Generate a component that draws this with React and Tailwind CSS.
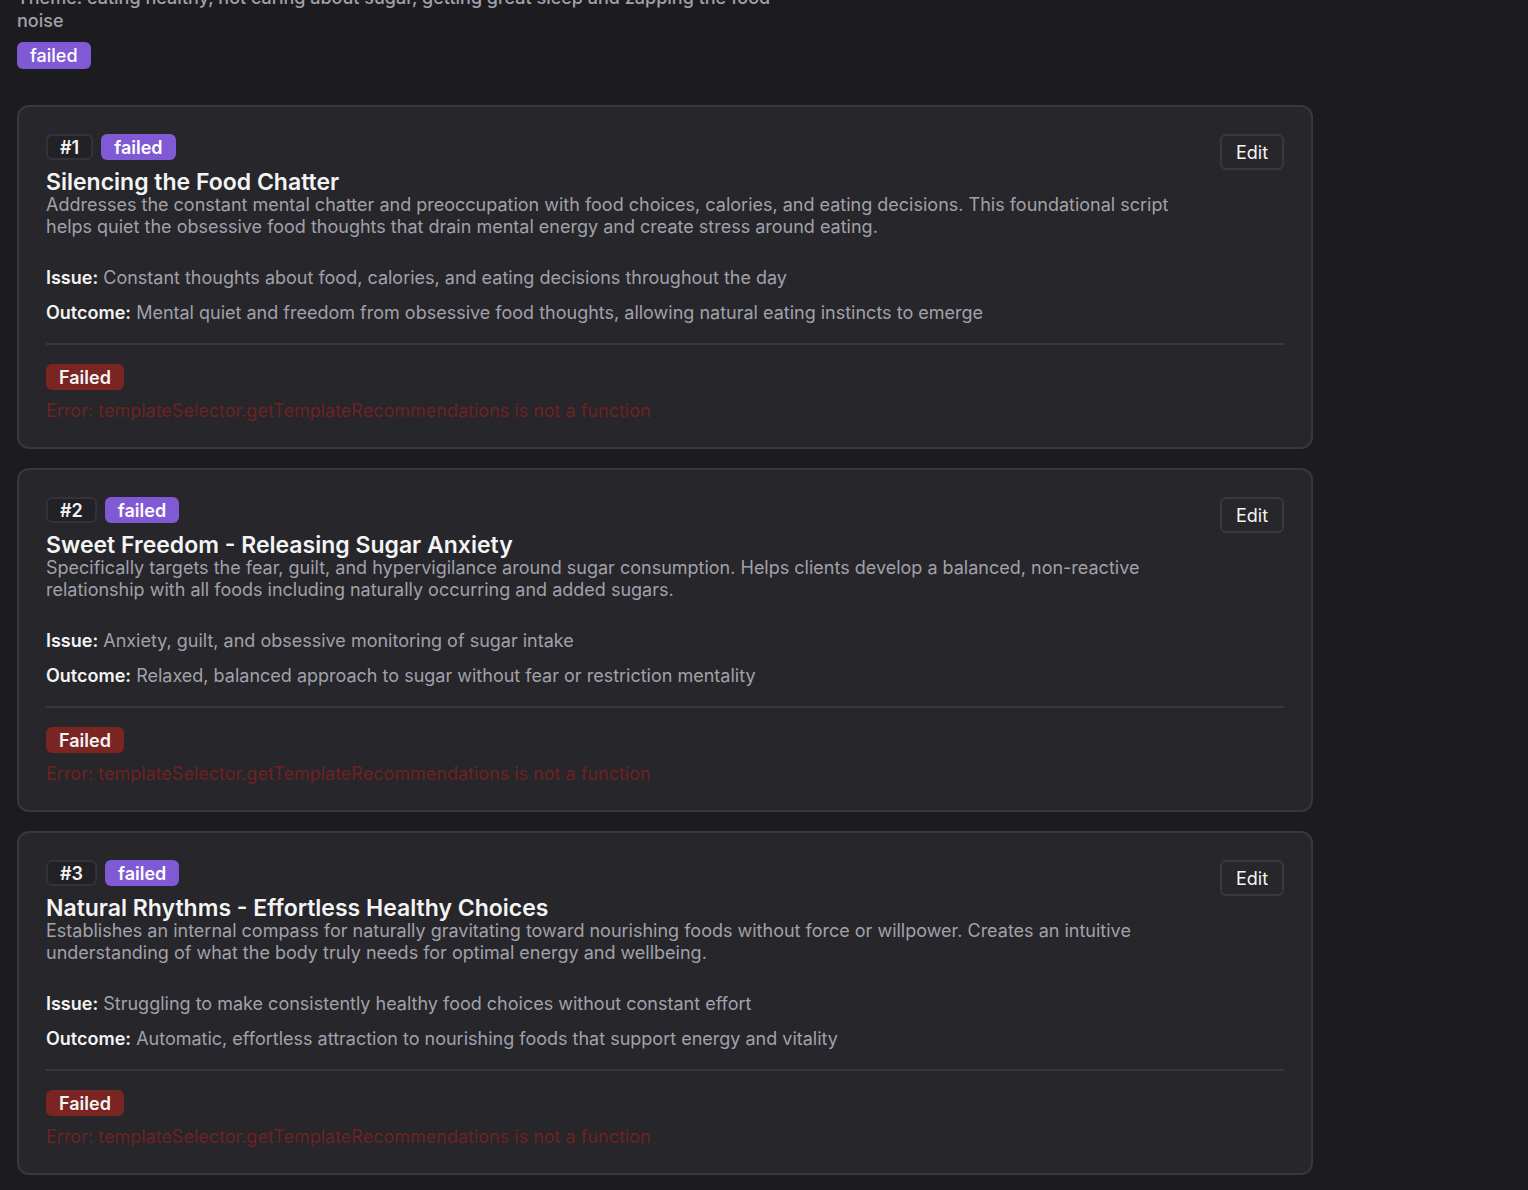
import React from 'react';

const scripts = [
  {
    n: 1,
    title: 'Silencing the Food Chatter',
    desc: 'Addresses the constant mental chatter and preoccupation with food choices, calories, and eating decisions. This foundational script helps quiet the obsessive food thoughts that drain mental energy and create stress around eating.',
    issue: 'Constant thoughts about food, calories, and eating decisions throughout the day',
    outcome: 'Mental quiet and freedom from obsessive food thoughts, allowing natural eating instincts to emerge',
  },
  {
    n: 2,
    title: 'Sweet Freedom - Releasing Sugar Anxiety',
    desc: 'Specifically targets the fear, guilt, and hypervigilance around sugar consumption. Helps clients develop a balanced, non-reactive relationship with all foods including naturally occurring and added sugars.',
    issue: 'Anxiety, guilt, and obsessive monitoring of sugar intake',
    outcome: 'Relaxed, balanced approach to sugar without fear or restriction mentality',
  },
  {
    n: 3,
    title: 'Natural Rhythms - Effortless Healthy Choices',
    desc: 'Establishes an internal compass for naturally gravitating toward nourishing foods without force or willpower. Creates an intuitive understanding of what the body truly needs for optimal energy and wellbeing.',
    issue: 'Struggling to make consistently healthy food choices without constant effort',
    outcome: 'Automatic, effortless attraction to nourishing foods that support energy and vitality',
  },
];

const ERROR_MSG = 'Error: templateSelector.getTemplateRecommendations is not a function';

const ScriptCard = ({ item }) => (
  <div className="w-[1296px] rounded-xl border-2 border-[#37373d] bg-[#26262b] pt-[27px] pb-[25px] px-[27px]">
    <div className="flex items-start gap-4">
      <div className="flex-1">
        <div className="flex items-center gap-[8px]">
          <span className="h-[26px] px-[12px] flex items-center rounded-md border-2 border-[#323238] bg-[#222226] text-[18px] font-semibold text-[#f4f4f5]">
            #{item.n}
          </span>
          <span className="h-[26px] px-[13px] flex items-center rounded-md bg-[#805ad5] text-[18px] font-semibold text-white">
            failed
          </span>
        </div>
        <h2 className="mt-[10px] text-[23px] leading-[24px] font-semibold text-[#f4f4f5]">{item.title}</h2>
        <p className="text-[18px] leading-[22px] text-[#a1a1aa]">{item.desc}</p>
      </div>
      <button className="w-[64px] h-[36px] rounded-md border-2 border-[#38383e] text-[18px] text-[#f4f4f5]">
        Edit
      </button>
    </div>

    <div className="mt-[28px] text-[18px] leading-[24px] text-[#a1a1aa]">
      <span className="font-semibold text-[#f4f4f5]">Issue:</span> {item.issue}
    </div>
    <div className="mt-[11px] text-[18px] leading-[24px] text-[#a1a1aa]">
      <span className="font-semibold text-[#f4f4f5]">Outcome:</span> {item.outcome}
    </div>

    <div className="mt-[18px] h-[2px] bg-[#37373d]" />

    <div className="mt-[19px]">
      <span className="inline-flex h-[26px] px-[13px] items-center rounded-md bg-[#7a2522] text-[18px] font-semibold text-[#f4f4f5]">
        Failed
      </span>
    </div>
    <p className="mt-[10px] text-[18px] leading-[22px] text-[#6e2222]">{ERROR_MSG}</p>
  </div>
);

export default function App() {
  return (
    <div className="min-h-screen bg-[#1c1c20] px-[17px] pb-10 overflow-hidden" style={{ fontFamily: 'Inter, "Noto Sans", sans-serif' }}>
      <div className="-mt-[14px]">
        <p className="w-[800px] text-[18px] leading-[23px] font-medium text-[#a1a1aa]">
          Theme: eating healthy, not caring about sugar, getting great sleep and zapping the food noise
        </p>
        <span className="mt-[10px] inline-flex h-[27px] px-[13px] items-center rounded-md bg-[#805ad5] text-[18px] font-medium text-white">
          failed
        </span>
      </div>

      {/* scripts list */}
      <div className="mt-[36px] flex flex-col gap-[19px]">
        {scripts.map((s) => (
          <ScriptCard key={s.n} item={s} />
        ))}
      </div>
    </div>
  );
}
